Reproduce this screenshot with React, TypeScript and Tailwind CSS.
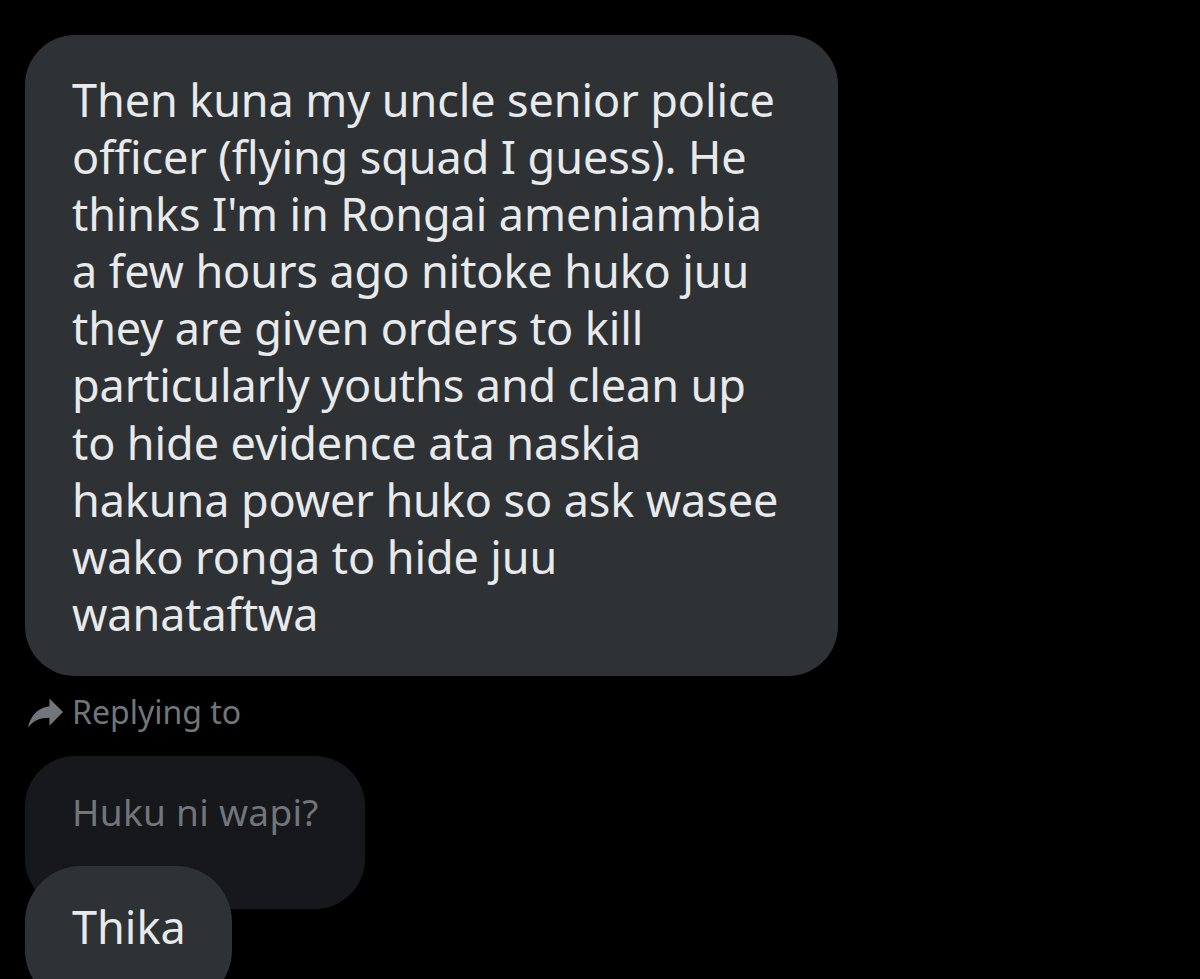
const lines = [
    'Then kuna my uncle senior police',
    'officer (flying squad I guess). He',
    "thinks I'm in Rongai ameniambia",
    'a few hours ago nitoke huko juu',
    'they are given orders to kill',
    'particularly youths and clean up',
    'to hide evidence ata naskia',
    'hakuna power huko so ask wasee',
    'wako ronga to hide juu',
    'wanataftwa',
]

function ForwardIcon() {
    return (
        <svg viewBox="3 4 19 16.5" className="w-[37px] h-[35px]" fill="#71767b">
            <path d="M14 9V5l7 7-7 7v-4.1c-5 0-8.5 1.6-11 5.1 1-5 4-10 11-11z" />
        </svg>
    )
}

export default function App() {
    return (
        <div
            className="w-[1200px] h-[979px] bg-black overflow-hidden"
            style={{fontFamily: '"Noto Sans", "Open Sans", sans-serif'}}
        >
            <div className="pt-[35px] pl-[25px]">
                <div className="w-[813px] h-[641px] bg-[#2f3235] rounded-[50px] pl-[47px] pt-[36px]">
                    {lines.map((line) => (
                        <div
                            key={line}
                            className="text-[45px] leading-[57.1px] text-[#e7e9ea] whitespace-nowrap tracking-[-0.1px]"
                        >
                            {line}
                        </div>
                    ))}
                </div>

                <div className="flex items-center mt-[19px] h-[34px]">
                    <div className="ml-[3px] w-[44px]">
                        <ForwardIcon />
                    </div>
                    <span className="text-[32px] text-[#71767b] leading-none">
                        Replying to
                    </span>
                </div>

                <div className="mt-[27px] w-[340px] h-[153px] bg-[#16181c] rounded-[50px] pl-[47px] pt-[34px]">
                    <span className="text-[37px] text-[#71767b] leading-[44px] tracking-[0.3px]">
                        Huku ni wapi?
                    </span>
                </div>

                <div className="relative -mt-[43px] w-[207px] h-[140px] bg-[#2f3235] rounded-[56px] pl-[47px] pt-[36px]">
                    <span className="text-[45px] text-[#e7e9ea] leading-[50px]">
                        Thika
                    </span>
                </div>
            </div>
        </div>
    )
}
